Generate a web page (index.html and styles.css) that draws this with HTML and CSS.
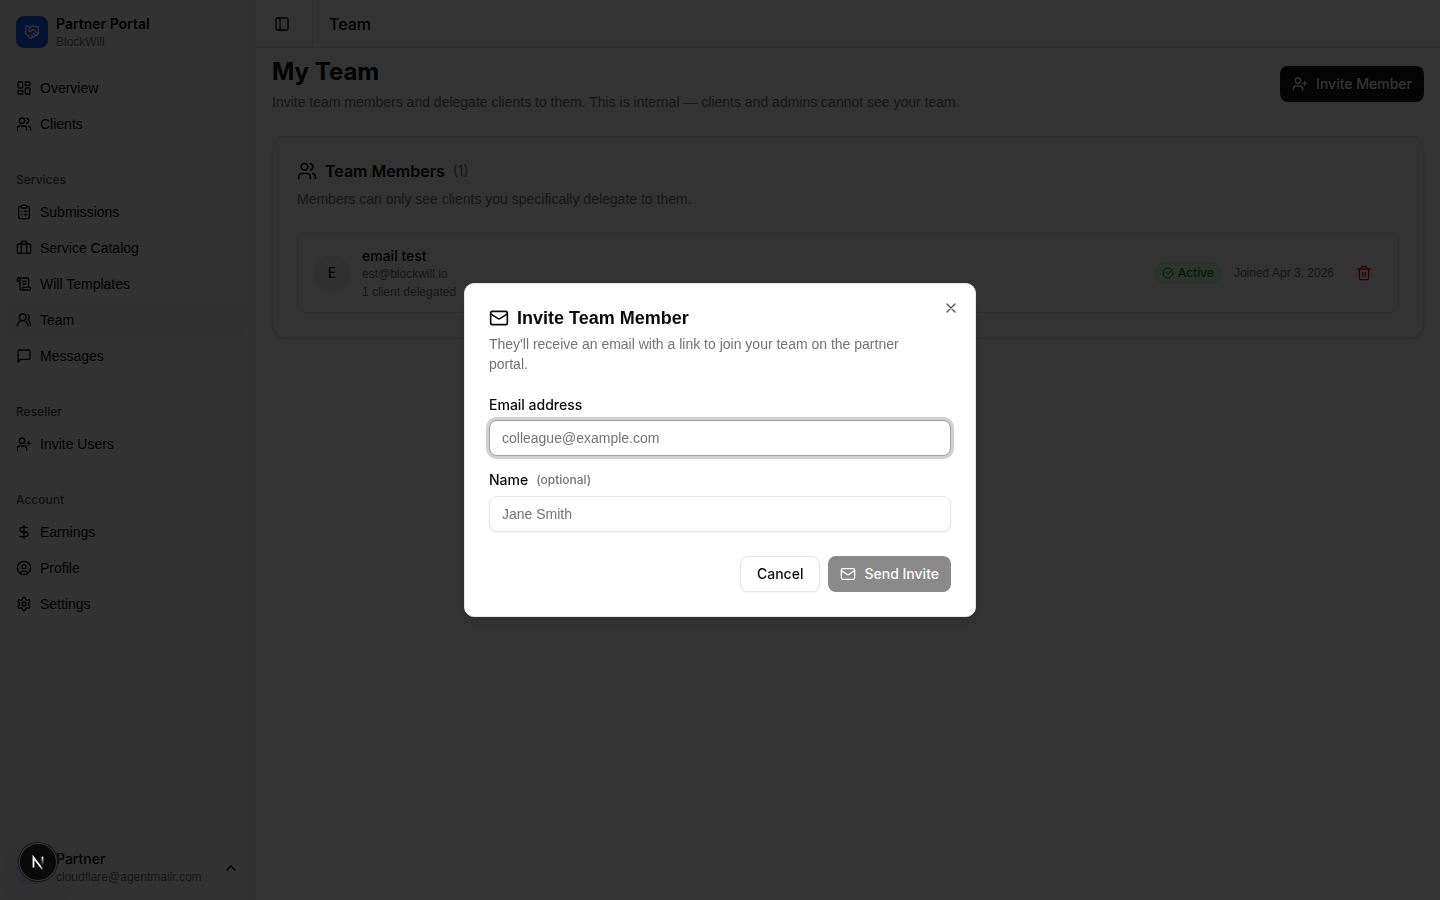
FILE: index.html
```
<!DOCTYPE html>
<html lang="en">
    <head>
        <meta charset="UTF-8" />
        <meta name="viewport" content="width=device-width, initial-scale=1.0" />
        <title>Team | Partner Portal</title>
        <link rel="stylesheet" href="styles.css">
    </head>
    <body>
        <!-- Shared icons -->
        <svg class="sprite" aria-hidden="true">
            <symbol id="users" viewBox="0 0 24 24">
                <path d="M16 21v-2a4 4 0 0 0-4-4H6a4 4 0 0 0-4 4v2" />
                <circle cx="9" cy="7" r="4" />
                <path d="M22 21v-2a4 4 0 0 0-3-3.87M16 3.13a4 4 0 0 1 0 7.75" />
            </symbol>
            <symbol id="user-plus" viewBox="0 0 24 24">
                <path d="M16 21v-2a4 4 0 0 0-4-4H6a4 4 0 0 0-4 4v2" />
                <circle cx="9" cy="7" r="4" />
                <path d="M19 8v6M22 11h-6" />
            </symbol>
            <symbol id="mail" viewBox="0 0 24 24">
                <path d="m22 7-8.991 5.727a2 2 0 0 1-2.009 0L2 7" />
                <rect x="2" y="4" width="20" height="16" rx="2" />
            </symbol>
        </svg>

        <div class="layout">
            <aside class="sidebar">
                <div class="brand">
                    <span class="brand-logo">
                        <svg class="icon" viewBox="0 0 24 24">
                            <path d="m11 17 2 2a1 1 0 1 0 3-3" />
                            <path d="m14 14 2.5 2.5a1 1 0 1 0 3-3l-3.88-3.88a3 3 0 0 0-4.24 0l-.88.88a1 1 0 1 1-3-3l2.81-2.81a5.79 5.79 0 0 1 7.06-.87l.47.28a2 2 0 0 0 1.42.25L21 4" />
                            <path d="m21 3 1 11h-2M3 3 2 14l6.5 6.5a1 1 0 1 0 3-3M3 4h8" />
                        </svg>
                    </span>
                    <div class="two-lines">
                        <span class="brand-name">Partner Portal</span>
                        <span class="small">BlockWill</span>
                    </div>
                </div>

                <nav class="nav">
                    <div class="nav-group">
                        <a class="nav-item" href="#">
                            <svg class="icon" viewBox="0 0 24 24">
                                <rect x="3" y="3" width="7" height="9" rx="1" />
                                <rect x="14" y="3" width="7" height="5" rx="1" />
                                <rect x="14" y="12" width="7" height="9" rx="1" />
                                <rect x="3" y="16" width="7" height="5" rx="1" />
                            </svg>
                            Overview
                        </a>
                        <a class="nav-item" href="#">
                            <svg class="icon"><use href="#users" /></svg>
                            Clients
                        </a>
                    </div>

                    <div class="nav-group">
                        <div class="nav-label">Services</div>
                        <a class="nav-item" href="#">
                            <svg class="icon" viewBox="0 0 24 24">
                                <rect x="8" y="2" width="8" height="4" rx="1" />
                                <path d="M16 4h2a2 2 0 0 1 2 2v14a2 2 0 0 1-2 2H6a2 2 0 0 1-2-2V6a2 2 0 0 1 2-2h2M12 11h4M12 16h4M8 11h.01M8 16h.01" />
                            </svg>
                            Submissions
                        </a>
                        <a class="nav-item" href="#">
                            <svg class="icon" viewBox="0 0 24 24">
                                <path d="M16 20V4a2 2 0 0 0-2-2h-4a2 2 0 0 0-2 2v16" />
                                <rect x="2" y="6" width="20" height="14" rx="2" />
                            </svg>
                            Service Catalog
                        </a>
                        <a class="nav-item" href="#">
                            <svg class="icon" viewBox="0 0 24 24">
                                <path d="M15 12h-5M15 8h-5M19 17V5a2 2 0 0 0-2-2H4" />
                                <path d="M8 21h12a2 2 0 0 0 2-2v-1a1 1 0 0 0-1-1H11a1 1 0 0 0-1 1v1a2 2 0 1 1-4 0V5a2 2 0 1 0-4 0v2a1 1 0 0 0 1 1h3" />
                            </svg>
                            Will Templates
                        </a>
                        <a class="nav-item active" href="#" aria-current="page">
                            <svg class="icon" viewBox="0 0 24 24">
                                <path d="M18 21a8 8 0 0 0-16 0" />
                                <circle cx="10" cy="8" r="5" />
                                <path d="M22 20c0-3.370-2-6.500-4-8a5 5 0 0 0-.450-8.300" />
                            </svg>
                            Team
                        </a>
                        <a class="nav-item" href="#">
                            <svg class="icon" viewBox="0 0 24 24">
                                <path d="M21 15a2 2 0 0 1-2 2H7l-4 4V5a2 2 0 0 1 2-2h14a2 2 0 0 1 2 2z" />
                            </svg>
                            Messages
                        </a>
                    </div>

                    <div class="nav-group">
                        <div class="nav-label">Reseller</div>
                        <a class="nav-item" href="#">
                            <svg class="icon"><use href="#user-plus" /></svg>
                            Invite Users
                        </a>
                    </div>

                    <div class="nav-group">
                        <div class="nav-label">Account</div>
                        <a class="nav-item" href="#">
                            <svg class="icon" viewBox="0 0 24 24">
                                <path d="M12 2v20M17 5H9.500a3.500 3.500 0 0 0 0 7h5a3.500 3.500 0 0 1 0 7H6" />
                            </svg>
                            Earnings
                        </a>
                        <a class="nav-item" href="#">
                            <svg class="icon" viewBox="0 0 24 24">
                                <circle cx="12" cy="12" r="10" />
                                <circle cx="12" cy="10" r="3" />
                                <path d="M7 20.662V19a2 2 0 0 1 2-2h6a2 2 0 0 1 2 2v1.662" />
                            </svg>
                            Profile
                        </a>
                        <a class="nav-item" href="#">
                            <svg class="icon" viewBox="0 0 24 24">
                                <path d="M12.220 2h-.440a2 2 0 0 0-2 2v.180a2 2 0 0 1-1 1.730l-.430.250a2 2 0 0 1-2 0l-.150-.080a2 2 0 0 0-2.730.730l-.220.380a2 2 0 0 0 .730 2.730l.150.100a2 2 0 0 1 1 1.720v.510a2 2 0 0 1-1 1.740l-.150.090a2 2 0 0 0-.730 2.730l.220.380a2 2 0 0 0 2.730.730l.150-.080a2 2 0 0 1 2 0l.430.250a2 2 0 0 1 1 1.730V20a2 2 0 0 0 2 2h.440a2 2 0 0 0 2-2v-.180a2 2 0 0 1 1-1.730l.430-.250a2 2 0 0 1 2 0l.150.080a2 2 0 0 0 2.730-.730l.220-.390a2 2 0 0 0-.730-2.730l-.150-.080a2 2 0 0 1-1-1.740v-.500a2 2 0 0 1 1-1.740l.150-.090a2 2 0 0 0 .730-2.730l-.220-.380a2 2 0 0 0-2.730-.730l-.150.080a2 2 0 0 1-2 0l-.430-.250a2 2 0 0 1-1-1.730V4a2 2 0 0 0-2-2z" />
                                <circle cx="12" cy="12" r="3" />
                            </svg>
                            Settings
                        </a>
                    </div>
                </nav>

                <button class="account" type="button">
                    <span class="account-avatar"></span>
                    <span class="two-lines">
                        <span class="account-name">Partner</span>
                        <span class="small">cloudflare@agentmailr.com</span>
                    </span>
                    <svg class="icon" viewBox="0 0 24 24"><path d="m18 15-6-6-6 6" /></svg>
                </button>
            </aside>

            <div class="content">
                <header class="topbar">
                    <button class="icon-button toggle" type="button" aria-label="Toggle sidebar">
                        <svg class="icon" viewBox="0 0 24 24">
                            <rect x="3" y="3" width="18" height="18" rx="2" />
                            <path d="M9 3v18" />
                        </svg>
                    </button>
                    <span class="topbar-title">Team</span>
                </header>

                <main class="main">
                    <div class="page-header">
                        <div>
                            <h1>My Team</h1>
                            <p class="muted">Invite team members and delegate clients to them. This is internal — clients and admins cannot see your team.</p>
                        </div>
                        <button class="button primary" type="button">
                            <svg class="icon"><use href="#user-plus" /></svg>
                            Invite Member
                        </button>
                    </div>

                    <section class="card">
                        <h2>
                            <svg class="icon large"><use href="#users" /></svg>
                            Team Members
                            <span class="count">(1)</span>
                        </h2>
                        <p class="muted">Members can only see clients you specifically delegate to them.</p>

                        <div class="member">
                            <span class="member-avatar">E</span>
                            <div class="member-info">
                                <span class="member-name">email test</span>
                                <span class="small">est@blockwill.io</span>
                                <span class="small">1 client delegated</span>
                            </div>
                            <span class="badge">
                                <svg class="icon tiny" viewBox="0 0 24 24">
                                    <path d="M21.801 10A10 10 0 1 1 17 3.335" />
                                    <path d="m9 11 3 3L22 4" />
                                </svg>
                                Active
                            </span>
                            <span class="small">Joined Apr 3, 2026</span>
                            <button class="icon-button delete" type="button" aria-label="Remove member">
                                <svg class="icon" viewBox="0 0 24 24">
                                    <path d="M3 6h18M19 6v14a2 2 0 0 1-2 2H7a2 2 0 0 1-2-2V6M8 6V4a2 2 0 0 1 2-2h4a2 2 0 0 1 2 2v2M10 11v6M14 11v6" />
                                </svg>
                            </button>
                        </div>
                    </section>
                </main>
            </div>
        </div>

        <div class="overlay">
            <div class="dialog" role="dialog" aria-modal="true" aria-labelledby="dialog-title">
                <div class="dialog-header">
                    <h2 id="dialog-title">
                        <svg class="icon large"><use href="#mail" /></svg>
                        Invite Team Member
                    </h2>
                    <p class="muted">They'll receive an email with a link to join your team on the partner portal.</p>
                </div>
                <form class="dialog-form">
                    <div class="field">
                        <label for="email">Email address</label>
                        <input class="focused" id="email" type="email" placeholder="colleague@example.com" />
                    </div>
                    <div class="field">
                        <label for="name">Name <span class="optional">(optional)</span></label>
                        <input id="name" type="text" placeholder="Jane Smith" />
                    </div>
                    <div class="dialog-footer">
                        <button class="button outline" type="button">Cancel</button>
                        <button class="button primary" type="submit" disabled>
                            <svg class="icon"><use href="#mail" /></svg>
                            Send Invite
                        </button>
                    </div>
                </form>
                <button class="close" type="button" aria-label="Close">
                    <svg class="icon" viewBox="0 0 24 24"><path d="M18 6 6 18M6 6l12 12" /></svg>
                </button>
            </div>
        </div>

        <button class="dev-badge" type="button" aria-label="Open dev tools">
            <svg viewBox="0 0 40 40">
                <defs>
                    <linearGradient id="fade-diagonal" x1="17" y1="17" x2="27" y2="29" gradientUnits="userSpaceOnUse">
                        <stop offset="0.6" stop-color="#fff" />
                        <stop offset="1" stop-color="#fff" stop-opacity="0" />
                    </linearGradient>
                    <linearGradient id="fade-stem" x1="0" y1="14" x2="0" y2="24" gradientUnits="userSpaceOnUse">
                        <stop stop-color="#fff" />
                        <stop offset="1" stop-color="#fff" stop-opacity="0" />
                    </linearGradient>
                </defs>
                <path d="M15 26V15L25 28" fill="none" stroke="url(#fade-diagonal)" stroke-width="2" />
                <path d="M24 14h2v10h-2z" fill="url(#fade-stem)" />
            </svg>
        </button>
    </body>
</html>
```
FILE: styles.css
```
:root {
    --font-text: "Liberation Sans", Arial, sans-serif;
    --font-ui: Inter, "Liberation Sans", sans-serif;
}
* {
    box-sizing: border-box;
}
body {
    margin: 0;
    font-family: var(--font-text);
    font-size: 14px;
    line-height: 20px;
    color: #0a0a0a;
    background: white;
}
h1,
h2,
p {
    margin: 0;
}
button,
input {
    font: inherit;
    color: inherit;
}
button {
    padding: 0;
    border: 0;
    background: none;
}
.sprite {
    display: none;
}
.icon {
    width: 16px;
    height: 16px;
    flex-shrink: 0;
    fill: none;
    stroke: currentColor;
    stroke-width: 2;
    stroke-linecap: round;
    stroke-linejoin: round;
}
.icon.large {
    width: 20px;
    height: 20px;
}
.icon.tiny {
    width: 12px;
    height: 12px;
}
.small {
    font-size: 12px;
    line-height: 16px;
    color: #737373;
}
.muted {
    color: #737373;
}
.layout {
    display: flex;
    min-height: 100vh;
}

/* Sidebar */
.sidebar {
    display: flex;
    flex-direction: column;
    width: 256px;
    flex-shrink: 0;
    background: #fafafa;
    border-right: 1px solid #e5e5e5;
}
.brand {
    display: flex;
    gap: 8px;
    padding: 16px;
}
.brand-logo {
    display: flex;
    align-items: center;
    justify-content: center;
    width: 32px;
    height: 32px;
    border-radius: 8px;
    color: white;
    background: #155dfc;
}
.two-lines {
    display: flex;
    flex-direction: column;
    gap: 2px;
    height: 32px;
    text-align: left;
}
.brand-name,
.account-name {
    font-family: var(--font-ui);
    line-height: 16px;
}
.brand-name {
    font-weight: 600;
}
.account-name {
    font-weight: 500;
}
.nav {
    display: flex;
    flex-direction: column;
    gap: 8px;
    flex: 1;
}
.nav-group {
    display: flex;
    flex-direction: column;
    gap: 4px;
    padding: 8px;
}
.nav-label {
    padding: 0 8px;
    margin-bottom: -4px;
    font-family: var(--font-ui);
    font-size: 12px;
    font-weight: 500;
    line-height: 32px;
    color: #555555;
}
.nav-item {
    display: flex;
    align-items: center;
    gap: 8px;
    height: 32px;
    padding: 0 8px;
    border-radius: 8px;
    color: inherit;
    text-decoration: none;
}
.nav-item.active {
    background: #f5f5f5;
}
.account {
    display: flex;
    align-items: center;
    gap: 8px;
    height: 48px;
    margin: 8px;
    padding: 0 8px;
}
.account-avatar {
    width: 32px;
    height: 32px;
    border-radius: 8px;
    background: #dbeafe;
}
.account .two-lines {
    justify-content: center;
}
.account .icon {
    margin-left: auto;
}

/* Page */
.content {
    flex: 1;
    min-width: 0;
}
.topbar {
    display: flex;
    align-items: center;
    height: 48px;
    border-bottom: 1px solid #e5e5e5;
}
.icon-button {
    display: flex;
    align-items: center;
    justify-content: center;
    width: 36px;
    height: 36px;
}
.toggle {
    width: 57px;
    height: 100%;
    padding-right: 4px;
    border-right: 1px solid #e5e5e5;
}
.topbar-title {
    padding-left: 16px;
    font-family: var(--font-ui);
    font-size: 16px;
    font-weight: 500;
    line-height: 20px;
}
.main {
    padding: 8px 16px;
}
.page-header {
    display: flex;
    align-items: center;
    justify-content: space-between;
    margin-bottom: 24px;
}
h1 {
    margin-bottom: 4px;
    font-family: var(--font-ui);
    font-size: 24px;
    font-weight: 700;
    line-height: 32px;
}
.button {
    display: flex;
    align-items: center;
    gap: 8px;
    height: 36px;
    padding: 0 12px;
    border-radius: 8px;
    font-family: var(--font-ui);
    font-weight: 500;
}
.button.primary {
    color: #fafafa;
    background: #171717;
}
.button.primary:disabled {
    opacity: 0.5;
}
.button.outline {
    padding: 0 16px;
    border: 1px solid #e5e5e5;
    background: white;
    box-shadow: 0 1px 2px rgba(0, 0, 0, 0.05);
}
.card {
    padding: 24px;
    border: 1px solid #e5e5e5;
    border-radius: 14px;
    background: white;
    box-shadow: 0 1px 3px rgba(0, 0, 0, 0.1), 0 1px 2px -1px rgba(0, 0, 0, 0.1);
}
.card h2 {
    display: flex;
    align-items: center;
    gap: 8px;
    margin-bottom: 8px;
    font-family: var(--font-ui);
    font-size: 16px;
    font-weight: 600;
}
.count {
    font-size: 14px;
    font-weight: 400;
    color: #737373;
}
.member {
    display: flex;
    align-items: center;
    gap: 12px;
    height: 80px;
    margin-top: 24px;
    padding: 0 16px;
    border: 1px solid #e5e5e5;
    border-radius: 10px;
}
.member-avatar {
    width: 36px;
    height: 36px;
    border-radius: 50%;
    font-family: var(--font-ui);
    font-weight: 500;
    line-height: 36px;
    text-align: center;
    background: #f5f5f5;
}
.member-info {
    display: flex;
    flex-direction: column;
    gap: 2px;
    flex: 1;
}
.member-name {
    margin-bottom: -2px;
    font-family: var(--font-ui);
    font-weight: 500;
    line-height: 20px;
}
.badge {
    display: flex;
    align-items: center;
    gap: 4px;
    padding: 3px 8px;
    border-radius: 12px;
    font-family: var(--font-ui);
    font-size: 12px;
    font-weight: 500;
    line-height: 16px;
    color: #008236;
    background: #dcfce7;
}
.delete {
    color: #e7000b;
}

/* Invite dialog */
.overlay {
    position: fixed;
    inset: 0;
    display: flex;
    align-items: center;
    justify-content: center;
    background: rgba(0, 0, 0, 0.8);
}
.dialog {
    position: relative;
    display: flex;
    flex-direction: column;
    gap: 24px;
    width: 100%;
    max-width: 512px;
    padding: 24px;
    border: 1px solid #e5e5e5;
    border-radius: 10px;
    background: white;
    box-shadow: 0 10px 15px -3px rgba(0, 0, 0, 0.1), 0 4px 6px -4px rgba(0, 0, 0, 0.1);
}
.dialog-header {
    padding-right: 24px;
}
.dialog-header h2 {
    display: flex;
    align-items: center;
    gap: 8px;
    margin-bottom: 6px;
    font-size: 18px;
    font-weight: 600;
    line-height: 20px;
}
.dialog-form,
.field {
    display: flex;
    flex-direction: column;
}
.dialog-form {
    gap: 16px;
}
.field {
    gap: 8px;
}
.field label {
    display: flex;
    align-items: center;
    gap: 8px;
    font-family: var(--font-ui);
    font-weight: 500;
    line-height: 14px;
}
.optional {
    font-size: 12px;
    line-height: 16px;
    color: #737373;
}
.field input {
    width: 100%;
    height: 36px;
    padding: 0 12px;
    border: 1px solid #e5e5e5;
    border-radius: 8px;
    outline: none;
    background: white;
    box-shadow: 0 1px 2px rgba(0, 0, 0, 0.05);
}
.field input::placeholder {
    color: #737373;
}
.field input.focused {
    border-color: #a1a1a1;
    box-shadow: 0 0 0 3px #d0d0d0;
}
.dialog-footer {
    display: flex;
    justify-content: flex-end;
    gap: 8px;
    margin-top: 8px;
}
.close {
    position: absolute;
    top: 16px;
    right: 16px;
    display: flex;
    opacity: 0.7;
}

/* Dev tools badge */
.dev-badge {
    position: fixed;
    left: 20px;
    bottom: 20px;
    width: 36px;
    height: 36px;
    border-radius: 50%;
    background: #0a0a0a;
    box-shadow: 0 0 0 1px #3a3a3a, 0 0 0 2px #171717, 0 16px 32px -8px rgba(0, 0, 0, 0.24);
}
.dev-badge svg {
    display: block;
    width: 36px;
    height: 36px;
}
```
